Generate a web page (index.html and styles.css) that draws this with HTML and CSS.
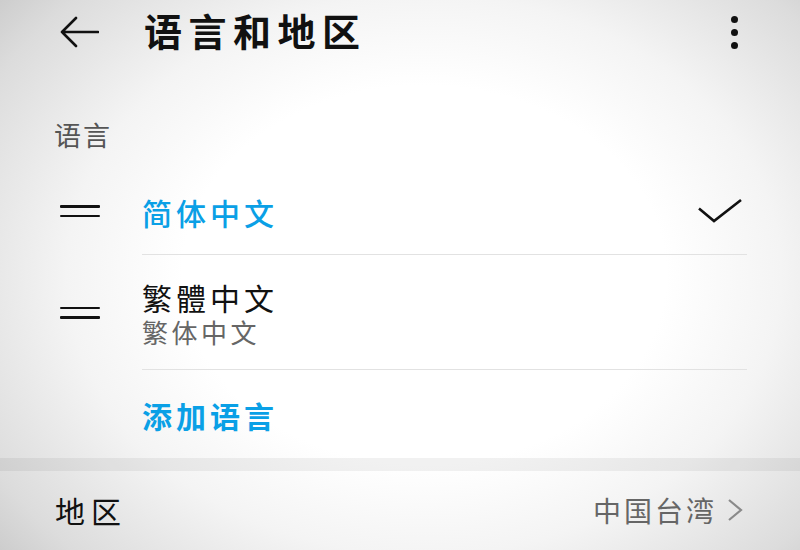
FILE: index.html
```html
<!DOCTYPE html>
<html lang="zh-CN">
<head>
<meta charset="utf-8">
<title>语言和地区</title>
<link rel="stylesheet" href="styles.css">
</head>
<body>
<div class="screen">
  <header class="topbar">
    <svg class="back" width="40" height="34" viewBox="0 0 40 34"><path d="M39 17H3M17 3L3 17l14 14" fill="none" stroke="#111" stroke-width="2.6" stroke-linecap="round" stroke-linejoin="round"/></svg>
    <h1 class="title">语言和地区</h1>
    <div class="more"><span></span><span></span><span></span></div>
  </header>

  <div class="section-label">语言</div>

  <div class="lang-row first">
    <div class="handle"><span></span><span></span></div>
    <div class="row-body">
      <div class="lang-name active">简体中文</div>
      <svg class="check" width="46" height="26" viewBox="0 0 46 26"><path d="M2 10.5L17 23 44 2" fill="none" stroke="#111" stroke-width="2.6" stroke-linejoin="miter"/></svg>
    </div>
  </div>

  <div class="lang-row second">
    <div class="handle"><span></span><span></span></div>
    <div class="row-body">
      <div class="lang-text">
        <div class="lang-name">繁體中文</div>
        <div class="lang-sub">繁体中文</div>
      </div>
    </div>
  </div>

  <div class="lang-row add">
    <div class="handle-space"></div>
    <div class="row-body nob">
      <div class="lang-name active strong">添加语言</div>
    </div>
  </div>

  <div class="band"></div>

  <div class="region-row">
    <div class="region-label">地区</div>
    <div class="region-value">中国台湾
      <svg class="chev" width="16" height="24" viewBox="0 0 16 24"><path d="M2 2l12 10L2 22" fill="none" stroke="#8a8a8a" stroke-width="2.2"/></svg>
    </div>
  </div>
</div>
</body>
</html>
```

FILE: styles.css
```css
html, body {
  margin: 0;
  padding: 0;
}
body {
  width: 800px;
  height: 550px;
  overflow: hidden;
  font-family: "Noto Sans CJK SC", "Noto Sans", sans-serif;
  background: radial-gradient(ellipse 72% 82% at 53% 50%, #ffffff 42%, #f4f4f4 62%, #dcdcdc 86%, #c6c6c6 100%);
}
.screen {
  width: 800px;
  height: 550px;
  display: flex;
  flex-direction: column;
}
.topbar {
  height: 64px;
  display: flex;
  align-items: center;
  padding-left: 59px;
  padding-right: 62px;
}
.back {
  display: block;
  flex: none;
}
.title {
  margin: -4px 0 0 45px;
  font-size: 38px;
  font-weight: 700;
  letter-spacing: 6.5px;
  color: #111;
  line-height: 40px;
  flex: 1;
}
.more {
  display: flex;
  flex-direction: column;
  gap: 6px;
  align-items: center;
}
.more span {
  width: 7px;
  height: 7px;
  border-radius: 50%;
  background: #111;
}
.section-label {
  padding: 56px 0 17px 54px;
  font-size: 27px;
  line-height: 30px;
  letter-spacing: 2px;
  color: #555;
}
.lang-row {
  display: flex;
  padding-left: 60px;
}
.handle, .handle-space {
  width: 40px;
  margin-right: 42px;
  flex: none;
  display: flex;
  flex-direction: column;
  justify-content: center;
  gap: 7px;
}
.handle span {
  height: 2.5px;
  background: #111;
  border-radius: 1px;
}
.row-body {
  flex: 1;
  margin-right: 53px;
  display: flex;
  align-items: center;
  justify-content: space-between;
  border-bottom: 1.5px solid #e2e2e2;
}
.row-body.nob {
  border-bottom: none;
}
.lang-row.first .row-body {
  height: 87px;
}
.lang-row.second .row-body {
  height: 114px;
}
.lang-row.add .row-body {
  height: 88px;
}
.check {
  display: block;
  margin-right: 4px;
}
.lang-name {
  font-size: 30px;
  line-height: 34px;
  letter-spacing: 4px;
  color: #111;
  padding-top: 2px;
}
.lang-name.active {
  color: #0aa0e6;
  font-weight: 500;
}
.lang-name.strong {
  font-weight: 700;
}
.lang-text {
  margin-top: 2px;
}
.lang-sub {
  margin-top: 2px;
  font-size: 26px;
  line-height: 32px;
  letter-spacing: 3.5px;
  color: #666;
}
.band {
  height: 13px;
  background: rgba(0, 0, 0, 0.055);
}
.region-row {
  flex: 1;
  display: flex;
  align-items: center;
  justify-content: space-between;
  padding: 0 57px 2px 55px;
}
.region-label {
  font-size: 30px;
  letter-spacing: 6px;
  color: #111;
}
.region-value {
  display: flex;
  align-items: center;
  gap: 10px;
  font-size: 28px;
  letter-spacing: 3px;
  color: #666;
}
.chev {
  display: block;
}
```
